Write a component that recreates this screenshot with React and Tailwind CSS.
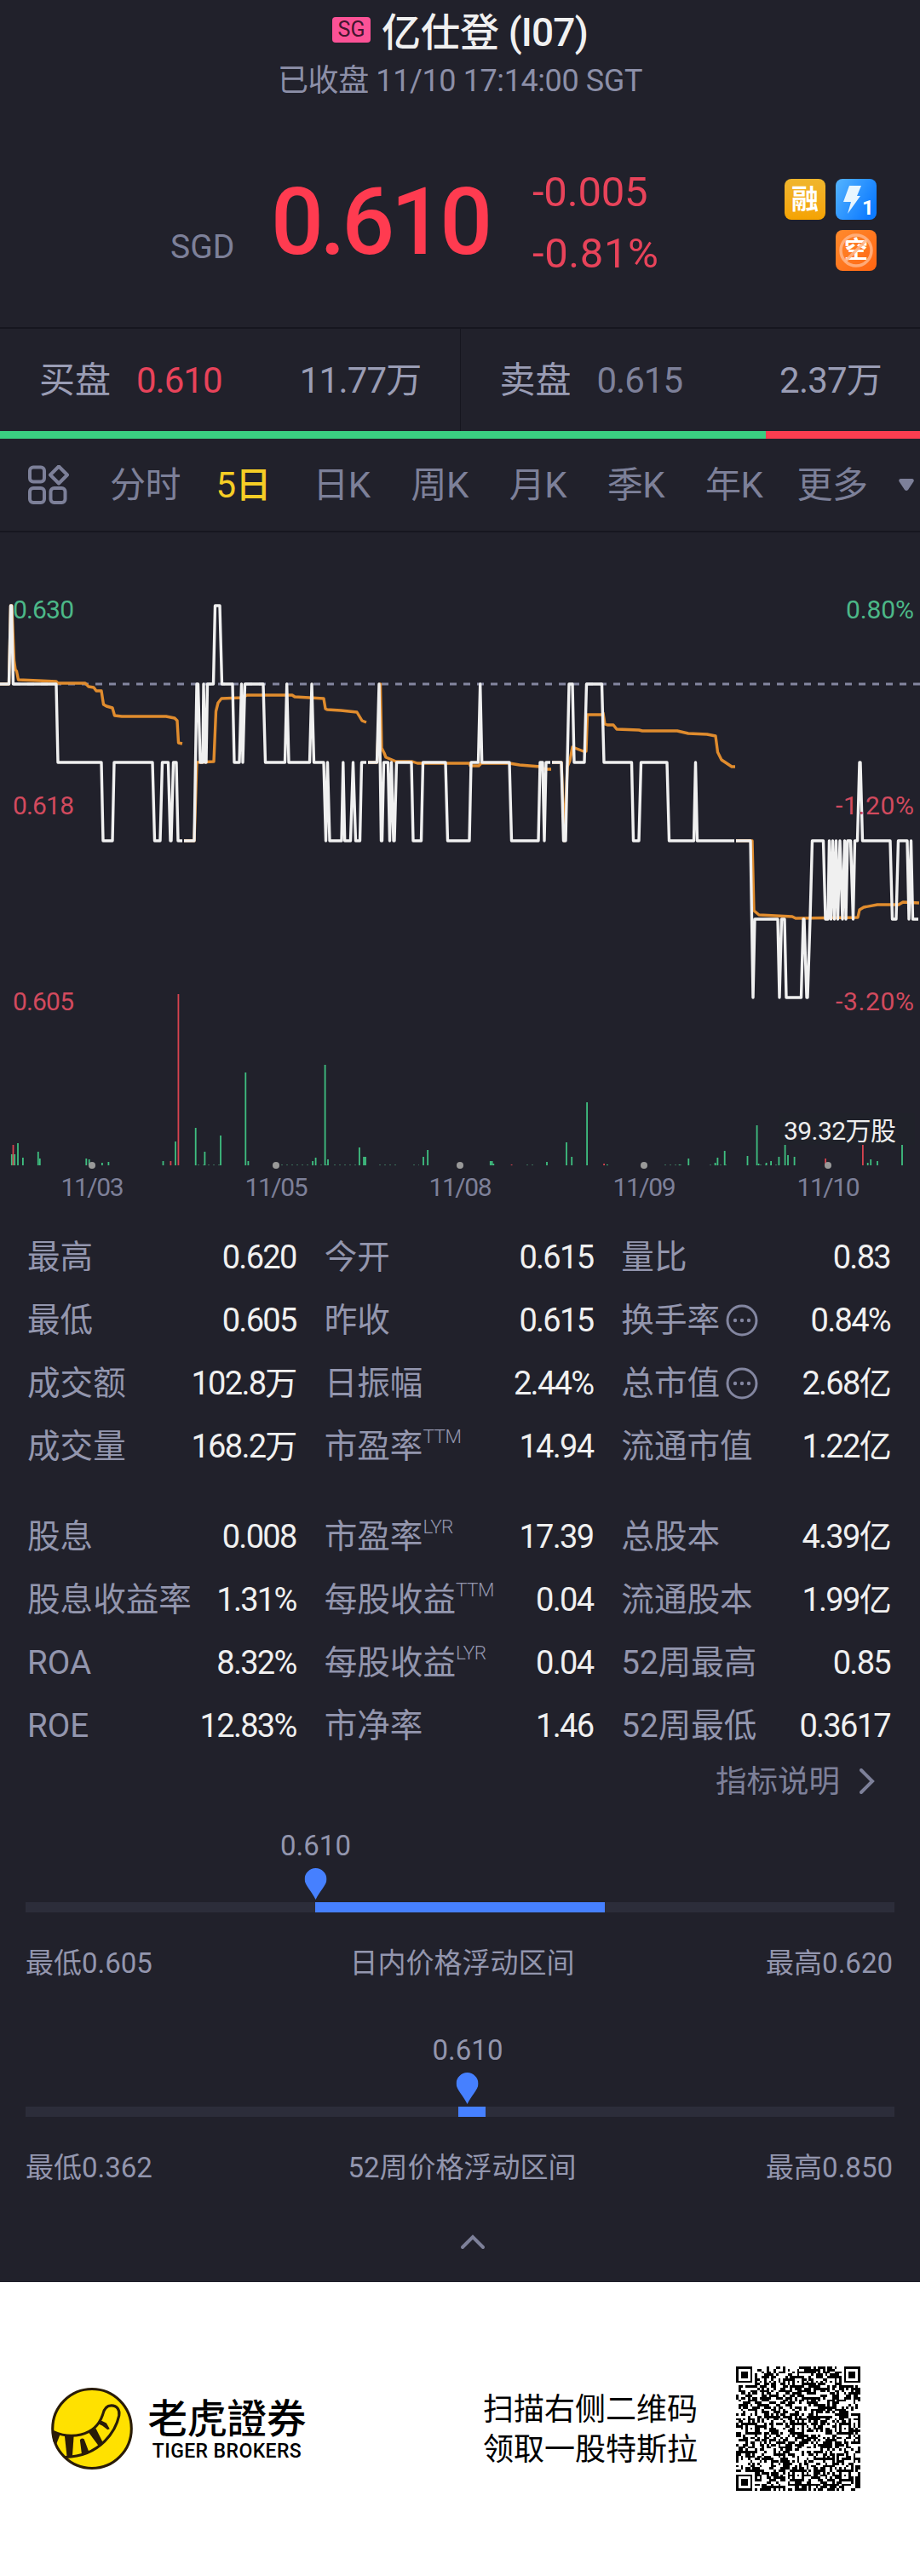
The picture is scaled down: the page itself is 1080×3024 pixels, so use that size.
import React from 'react';

const FONT = "font-['Roboto','Noto_Sans_CJK_SC',sans-serif]";

const tabs = ['分时', '5日', '日K', '周K', '月K', '季K', '年K', '更多'];

const stats = [
    [
        ['最高', '0.620'], ['今开', '0.615'], ['量比', '0.83'],
        ['最低', '0.605'], ['昨收', '0.615'], ['换手率', '0.84%', null, true],
        ['成交额', '102.8万'], ['日振幅', '2.44%'], ['总市值', '2.68亿', null, true],
        ['成交量', '168.2万'], ['市盈率', '14.94', 'TTM'], ['流通市值', '1.22亿'],
    ],
    [
        ['股息', '0.008'], ['市盈率', '17.39', 'LYR'], ['总股本', '4.39亿'],
        ['股息收益率', '1.31%'], ['每股收益', '0.04', 'TTM'], ['流通股本', '1.99亿'],
        ['ROA', '8.32%'], ['每股收益', '0.04', 'LYR'], ['52周最高', '0.85'],
        ['ROE', '12.83%'], ['市净率', '1.46'], ['52周最低', '0.3617'],
    ],
];

// price steps per session, y levels are half-cent ticks
const A = 711, B = 803, C = 895, D = 987, E = 1079, F = 1171;

const price = [
    [0, B, 10.5, B, 12.5, A, 13.5, A, 15.5, B, 66, B, 68, C, 119, C, 121, D, 132, D, 134, C, 179, C, 181.5, D, 188, D, 190.5, C, 197.5, C, 200, D, 201, D, 203.5, C, 207, C, 209, D, 214, D],
    [216, D, 228, D, 231, B, 232.5, B, 235, C, 238, C, 239, B, 241, C, 242, C, 243.5, B, 250.5, B, 252.5, A, 258, A, 260.5, B, 273, B, 275, C, 281, C, 283.5, B, 285, C, 287.5, B, 309, B, 311.5, C, 334.5, C, 336.7, B, 339, C, 363.5, C, 366, B, 368.5, C, 380, C, 382.5, D, 384.5, C, 387, D, 401, D, 402.8, C, 404.7, D, 411.5, D, 414.5, C, 417.5, D, 422.5, D, 424.5, C, 430, C],
    [432, C, 442.5, C, 445, B, 447.5, D, 448.5, D, 450.5, C, 455.5, C, 457.5, D, 459.5, C, 462, D, 463, D, 465.5, C, 483, C, 485, D, 494.5, D, 496.5, C, 523, C, 525.5, D, 551, D, 553, C, 561.5, C, 563.7, B, 565.7, C, 598, C, 600.5, D, 632, D, 634, C, 637, C, 639, D, 641, C, 646, C],
    [648, C, 659, C, 661.5, D, 664, D, 668, B, 672, B, 674, C, 686, C, 688.5, B, 706.5, B, 709, C, 741.5, C, 743.5, D, 750, D, 752.5, C, 783, C, 785.5, D, 814.5, D, 816.5, C, 818.5, D, 862, D],
    [864, D, 881, D, 884, F, 886, E, 913, E, 915, F, 917.5, E, 921, E, 923, F, 940.5, F, 943, E, 944, E, 947, F, 948, F, 951, E, 953.5, D, 966.5, D, 969, E, 972, E, 973.5, D, 975.5, E, 977.5, D, 979.5, E, 981.5, D, 983.5, E, 986, D, 989, E, 991.5, D, 993, E, 995, D, 998.5, D, 1001.5, E, 1003.5, D, 1006.5, D, 1009, C, 1010, C, 1012.5, D, 1045, D, 1047.5, E, 1052, E, 1054.5, D, 1065, D, 1067, E, 1069.5, D, 1071.5, E, 1078, E],
];

const average = [
    [0, B, 10.5, B, 12.5, A, 14, A, 16.5, 775, 18, 786, 19.5, 788, 21.5, 798, 45, 799, 66, 800, 68, 802, 100, 802, 104, 806, 110, 807, 113, 811, 119, 811, 121.5, 827, 125, 829, 132, 831, 134.5, 840, 143, 841, 195, 841, 205, 843, 208, 846, 209.5, 872, 214, 873],
    [216, D, 228, D, 231, C, 251, 894, 253.5, 835, 256, 825, 260, 820, 284, 819, 290, 816, 343, 816, 346, 818, 380, 820, 382, 832, 384, 833, 400, 834, 419, 836, 425, 846, 430, 848],
    [432, C, 442.5, C, 446.5, B, 448, 878, 451, 884, 453, 889, 465, 894, 484, 894, 490, 896, 551, 896, 552, 899, 562, 899, 565, 896, 598, 896, 610, 898, 634, 900, 640, 903, 647, 903],
    [648, C, 659, C, 662.5, D, 666, 900, 669, 893, 672, 877, 685, 882, 688, 882, 689.5, 839, 706.5, 839, 708, 837, 710, 850, 713, 851, 720, 851, 724, 856, 750, 857, 754, 858, 795, 858, 808, 861, 830, 862, 840, 864, 842.5, 883, 847, 892, 859, 900, 863, 900],
    [864, D, 883, D, 885, 1069, 891, 1074, 930, 1076, 934, 1078, 1007, 1077, 1009, 1068, 1014, 1065, 1030, 1062, 1055, 1062, 1060, 1059, 1079, 1060],
];

// [x, height, down]
const volume = [
    [13.8, 13], [15.5, 24, 1], [17.2, 13], [21, 26], [26.9, 9], [44.8, 16], [46.8, 8], [101.3, 8], [104.7, 7], [119.9, 3], [127.4, 4],
    [191.5, 5], [200.4, 5, 1], [206, 28], [209.4, 201, 1], [229.7, 44], [240.4, 16], [259, 35], [288.3, 109], [291.4, 5],
    [367.1, 5], [370.6, 9], [381.6, 118], [385, 7], [421.9, 21], [427.1, 10], [429.1, 10], [497, 10], [502.1, 18],
    [575.8, 5], [577.6, 5], [579.3, 2], [600.6, 1, 1], [642, 4], [665, 27], [671.2, 10], [689.1, 74], [709.1, 2, 1], [712.9, 1],
    [797.6, 1], [808.3, 8], [839.6, 3], [842.4, 9], [850.7, 17], [877.5, 11], [888.6, 47], [890.6, 2], [899.6, 3], [905.1, 5],
    [914.4, 10], [921.6, 52], [925, 12], [932.6, 10], [969.1, 8, 1], [1012.9, 45, 1], [1018.7, 3], [1022.2, 7], [1030, 5], [1059, 25],
];

const faintVolume = [[232, 258], [330, 366], [376, 384], [392, 420], [445, 466], [485, 492], [618, 628], [780, 800], [833, 856], [892, 912]];

const days = [['11/03', 108], ['11/05', 324], ['11/08', 540], ['11/09', 756], ['11/10', 972]];

function Chart() {
    return (
        <svg className="block h-[809px] w-full" viewBox="0 625 1080 809" fill="none">
            <line x1="0" x2="1080" y1="803" y2="803" stroke="#8486a0" strokeWidth="3" strokeDasharray="8 8" />
            {average.map((p, i) => <polyline key={i} points={p.join(' ')} stroke="#e08c2e" strokeWidth="3.4" strokeLinejoin="round" />)}
            {price.map((p, i) => <polyline key={i} points={p.join(' ')} stroke="#f0f0f0" strokeWidth="3.4" strokeLinejoin="round" />)}

            {faintVolume.map(([a, b]) => <line key={a} x1={a} x2={b} y1="1367.5" y2="1367.5" stroke="#3a6b58" strokeDasharray="2 4" />)}
            {volume.map(([x, h, down]) => (
                <rect key={x} x={x - 0.9} y={1368 - h} width="1.8" height={h} fill={down ? '#d8434f' : '#3fbf80'} />
            ))}

            <rect x="914" y="1306" width="160" height="38" fill="#20222a" />
            <text x="920" y="1338" fontSize="30" fill="#eeeeee" textLength="132">39.32万股</text>

            <g fontSize="30" fill="#4cb888">
                <text x="15" y="725.5" textLength="72">0.630</text>
                <text x="993" y="725.5" textLength="80">0.80%</text>
            </g>
            <g fontSize="30" fill="#d24a5e">
                <text x="15" y="955.5" textLength="72">0.618</text>
                <text x="15" y="1185.5" textLength="72">0.605</text>
                <text x="981" y="955.5" textLength="92">-1.20%</text>
                <text x="981" y="1185.5" textLength="92">-3.20%</text>
            </g>
            {days.map(([label, x]) => (
                <g key={label}>
                    <circle cx={x} cy="1368" r="4" fill="#999999" />
                    <text x={x - 36.5} y="1403.5" fontSize="30" fill="#7d8099" textLength="74">{label}</text>
                </g>
            ))}
        </svg>
    );
}

function Quote({ label, value, amount, valueClass }) {
    return (
        <div className="flex flex-1 items-center pr-[45px] pl-[46px] text-[42px]">
            <span className="text-[#9a9db5]">{label}</span>
            <span className={`ml-[30px] tracking-[-1px] ${valueClass}`}>{value}</span>
            <span className="ml-auto tracking-[-0.8px] text-[#9a9db5]">{amount}</span>
        </div>
    );
}

function MoreIcon() {
    return (
        <svg className="ml-[7px] size-[38px]" viewBox="0 0 38 38" fill="#8386a0">
            <circle cx="19" cy="19" r="17" fill="none" stroke="#8386a0" strokeWidth="3" />
            <circle cx="11" cy="19" r="2.2" />
            <circle cx="19" cy="19" r="2.2" />
            <circle cx="27" cy="19" r="2.2" />
        </svg>
    );
}

function Stat({ item }) {
    const [label, value, sup, more] = item;
    return (
        <div className="flex h-[74px] items-center justify-between">
            <span className="flex items-center text-[38.6px] whitespace-nowrap text-[#9396ae]">
                {label}
                {sup && <span className="mb-[22px] text-[22.5px] font-light tracking-[-0.5px]">{sup}</span>}
                {more && <MoreIcon />}
            </span>
            <span className="text-[38px] tracking-[-1.7px] whitespace-nowrap text-[#f0f0f0]">{value}</span>
        </div>
    );
}

function Range({ price, marker, start, width, low, title, high }) {
    return (
        <div className="h-[240px] px-[30px] text-[33px] leading-[38px] text-[#9396ae]">
            <div className="relative h-[85px]">
                <div className="absolute top-0 flex -translate-x-1/2 flex-col items-center" style={{ left: marker }}>
                    <span>{price}</span>
                    <svg className="mt-[7px] h-[37px] w-[26px]" viewBox="0 0 26 37" fill="#4680ff">
                        <path d="M13 0C20 0 26 6 26 13c0 7-9 15-13 24C9 28 0 20 0 13 0 6 6 0 13 0z" />
                    </svg>
                </div>
            </div>
            <div className="h-3 bg-[#2c2d3a]">
                <div className="h-full bg-[#4680ff]" style={{ marginLeft: start, width }}></div>
            </div>
            <div className="mt-[41px] flex justify-between pr-[2px]">
                <span>{low}</span>
                <span className="pl-[7px]">{title}</span>
                <span>{high}</span>
            </div>
        </div>
    );
}

function TigerLogo() {
    return (
        <svg className="h-[96px] w-[96px]" viewBox="174 189 278 285" preserveAspectRatio="none" fill="#2a1c08">
            <ellipse cx="313" cy="331.5" rx="134" ry="138" fill="#ffe100" stroke="#2a1c08" strokeWidth="9" />
            <path d="M182 342C235 366 322 364 349 284C354 260 364 251 379 251C398 251 408 266 405 286C395 335 345 428 222 431" fill="none" stroke="#2a1c08" strokeWidth="9" />
            <path d="M180 337L204 353L191 388L181 376Z" />
            <path d="M220 356L251 358L246 431L228 431Z" />
            <path d="M272 371Q277 362 286 368L302 411L278 420Z" />
            <path d="M300 343L326 331L350 380L335 391Z" />
            <path d="M330 313L344 303L362 312L373 332L366 335L348 321Z" />
        </svg>
    );
}

const QR_SIZE = 53;

function qrPath() {
    const finder = (x, y) => {
        const d = Math.max(Math.abs(x - 3), Math.abs(y - 3));
        return d === 4 ? 0 : d === 2 ? 0 : 1;
    };
    let seed = 20211;
    let d = '';
    for (let y = 0; y < QR_SIZE; y++) {
        for (let x = 0; x < QR_SIZE; x++) {
            seed = (seed * 48271) % 2147483647;
            let on = seed % 100 < 53;
            const right = x > QR_SIZE - 9;
            const bottom = y > QR_SIZE - 9;
            const fx = right ? x - QR_SIZE + 7 : x;
            const fy = bottom ? y - QR_SIZE + 7 : y;
            const ax = [6, 26, 46].find((c) => Math.abs(x - c) < 3);
            const ay = [6, 26, 46].find((c) => Math.abs(y - c) < 3);
            if (fx < 8 && fy < 8 && !(right && bottom)) on = finder(fx, fy);
            else if (ax !== undefined && ay !== undefined) on = Math.max(Math.abs(x - ax), Math.abs(y - ay)) !== 1;
            else if (x === 6 || y === 6) on = (x + y) % 2 === 0;
            if (on) d += `M${x} ${y}h1v1h-1z`;
        }
    }
    return d;
}

export default function App() {
    return (
        <div className={`w-[1080px] bg-[#21212b] ${FONT}`}>
            {/* Title */}
            <header className="flex h-[184px] flex-col items-center">
                <div className="mt-[8px] flex h-[60px] items-center gap-[13px]">
                    <span className="mb-[6px] flex h-[30px] w-[45px] items-center justify-center rounded-[4px] bg-[#fb5296] text-[25px] text-[#43152f]">SG</span>
                    <h1 className="text-[46px] leading-none font-medium whitespace-pre text-[#f0f0f0]">
                        亿仕登<span className="tracking-[-0.8px]"> (I07)</span>
                    </h1>
                </div>
                <p className="mt-[5px] text-[36px] leading-[44px] tracking-[-0.4px] text-[#8c8fa8]">已收盘 11/10 17:14:00 SGT</p>
            </header>

            {/* Price */}
            <section className="flex h-[200px] pl-[200px]">
                <span className="mt-[83px] w-[118px] text-[39px] leading-[46px] text-[#7d8099]">SGD</span>
                <span className="mt-[13px] w-[307px] text-[109px] leading-[128px] font-medium tracking-[-4.5px] text-[#ff3b50]">0.610</span>
                <div className="mt-[6px] w-[296px] text-[49px] leading-[72px] text-[#e8435a]">
                    <div className="tracking-[-0.2px]">-0.005</div>
                    <div className="tracking-[0.6px]">-0.81%</div>
                </div>
                <div className="mt-[26px] grid h-[108px] grid-cols-2 gap-3 text-[32px] leading-none font-bold text-white">
                    <span className="flex size-12 items-center justify-center rounded-lg bg-linear-to-b from-[#f0b62c] to-[#f5a300]">融</span>
                    <svg className="size-12" viewBox="0 0 48 48">
                        <defs>
                            <linearGradient id="flash" x1="0" y1="0" x2="1" y2="0.6">
                                <stop offset="0" stopColor="#55b4ff" />
                                <stop offset="1" stopColor="#0d7bff" />
                            </linearGradient>
                        </defs>
                        <rect width="48" height="48" rx="8" fill="url(#flash)" />
                        <path d="M16 8h14l-5 12h4L14 41l4-14H9z" fill="#e8f6ff" />
                        <text x="31" y="42" fontSize="24" fontWeight="700" fill="#fff">1</text>
                    </svg>
                    <span className="relative col-start-2 flex size-12 items-center justify-center rounded-lg bg-linear-to-br from-[#ff8a2c] to-[#ff6410] text-[28px]">
                        空
                        <svg className="absolute inset-0 size-12" viewBox="0 0 48 48" fill="none" stroke="#ffb588" strokeOpacity="0.85" strokeWidth="3.5">
                            <circle cx="24" cy="24" r="18" />
                            <path d="M11 37L37 11" />
                        </svg>
                    </span>
                </div>
            </section>

            {/* Bid / ask */}
            <section className="flex h-[122px] divide-x divide-[#16161f] border-t-2 border-[#16161f]">
                <Quote label="买盘" value="0.610" amount="11.77万" valueClass="text-[#e8435a]" />
                <Quote label="卖盘" value="0.615" amount="2.37万" valueClass="text-[#7d8099]" />
            </section>
            <div className="flex h-[9px]">
                <div className="w-[899px] bg-[#3ace82]"></div>
                <div className="flex-1 bg-[#fb3d50]"></div>
            </div>

            {/* Period tabs */}
            <nav className="flex h-[110px] items-center border-b-2 border-[#16161f] pl-[33px] text-[42px] text-[#7d8099]">
                <svg className="h-[46px] w-[48px]" viewBox="0 0 48 46" fill="none" stroke="#7d8099" strokeWidth="4">
                    <rect x="2" y="2.5" width="17" height="17" rx="4" />
                    <rect x="2" y="27" width="17" height="17" rx="4" />
                    <rect x="26.500" y="27" width="17" height="17" rx="4" />
                    <path d="M36 1.500L46 11.500L36 21.500L26 11.500Z" strokeLinejoin="round" />
                </svg>
                <div className="ml-[32px] flex">
                    {tabs.map((tab) => (
                        <span key={tab} className={`w-[115.200px] text-center tracking-[-0.5px] ${tab === '5日' ? 'text-[#f5cd25]' : ''}`}>
                            {tab === '5日' ? <>5<span className="font-medium">日</span></> : tab}
                        </span>
                    ))}
                </div>
                <svg className="ml-[20px] h-[14px] w-[18px]" viewBox="0 0 18 14" fill="#7d8099">
                    <path d="M2 0h14q3 1 1 4l-6 9q-2 2-4 0L1 4q-2-3 1-4z" />
                </svg>
            </nav>

            <Chart />

            {/* Key figures */}
            <section className="mt-[5px] flex flex-col gap-[32px] pr-[35px] pl-[32px]">
                {stats.map((group, i) => (
                    <div key={i} className="grid grid-cols-3 gap-x-[33px]">
                        {group.map((item, j) => <Stat key={j} item={item} />)}
                    </div>
                ))}
            </section>
            <div className="flex h-[85px] items-start justify-end pr-[53px] text-[36.500px] leading-[57px] text-[#7d8099]">
                指标说明
                <svg className="mt-[13px] ml-[23px] h-[30px] w-[18px]" viewBox="0 0 18 30" fill="none" stroke="#7d8099" strokeWidth="4">
                    <path d="M2 2l13 13L2 28" strokeLinecap="round" />
                </svg>
            </div>

            {/* Price ranges */}
            <Range price="0.610" marker={340.5} start={340} width={340} low="最低0.605" title="日内价格浮动区间" high="最高0.620" />
            <Range price="0.610" marker={519} start={508} width={32} low="最低0.362" title="52周价格浮动区间" high="最高0.850" />
            <div className="flex h-[51px] pl-[540px]">
                <svg className="-mt-[5px] h-[18px] w-[30px]" viewBox="0 0 30 18" fill="none" stroke="#7d8099" strokeWidth="4">
                    <path d="M3 15L15 3l12 12" strokeLinecap="round" />
                </svg>
            </div>

            {/* Promo footer */}
            <footer className="flex h-[345px] items-center bg-white pb-[1px] pl-[60px] text-black">
                <TigerLogo />
                <div className="ml-[17px] flex w-[187px] flex-col items-center">
                    <span className="font-['Noto_Sans_CJK_TC',sans-serif] text-[46.500px] leading-[50px] font-medium">老虎證券</span>
                    <span className="mt-[4px] text-[23px] leading-[26px] font-medium tracking-[0.4px] whitespace-nowrap">TIGER BROKERS</span>
                </div>
                <p className="mt-[4px] ml-[207px] text-[36px] leading-[47px] whitespace-nowrap">
                    扫描右侧二维码<br />领取一股特斯拉
                </p>
                <svg className="ml-[45px] size-[146px]" viewBox="0 0 53 53" shapeRendering="crispEdges">
                    <path d={qrPath()} />
                </svg>
            </footer>
        </div>
    );
}
